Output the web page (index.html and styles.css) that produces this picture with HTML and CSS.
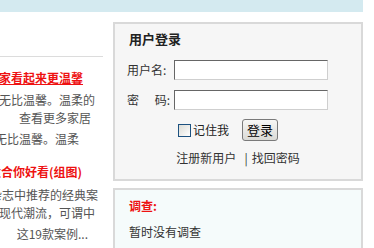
FILE: index.html
```html
<!DOCTYPE html>
<html lang="zh-CN">
<head>
<meta charset="utf-8">
<title>用户登录</title>
<link rel="stylesheet" href="styles.css">
</head>
<body>
<div class="topbar"></div>
<div class="main">
  <div class="left">
    <div class="rule"></div>
    <div class="news">
      <div class="ln t1"><a class="red ul">大家看起来更温馨</a></div>
      <div class="ln l2"><span>给人无比温馨。温柔的</span></div>
      <div class="ln l3"><a class="more">查看更多家居</a></div>
      <div class="ln l4"><span>给人无比温馨。温柔</span></div>
      <div class="ln t2"><a class="red">适合你好看(组图)</a></div>
      <div class="ln l6"><span>国外杂志中推荐的经典案</span></div>
      <div class="ln l7"><span>现代潮流，可谓中</span></div>
      <div class="ln l8"><span>这19款案例...</span></div>
    </div>
  </div>
  <div class="right">
    <div class="login">
      <div class="login-title">用户登录</div>
      <div class="frow r1">
        <label class="lab">用户名:</label>
        <input class="txt" type="text">
      </div>
      <div class="frow r2">
        <label class="lab lab-sp"><span>密</span><span>码:</span></label>
        <input class="txt" type="password">
      </div>
      <div class="crow">
        <input class="chk" type="checkbox">
        <span class="remember">记住我</span>
        <button class="btn" type="button">登录</button>
      </div>
      <div class="links"><a>注册新用户</a><span class="sep">|</span><a>找回密码</a></div>
    </div>
    <div class="poll">
      <div class="poll-title">调查:</div>
      <div class="poll-text">暂时没有调查</div>
    </div>
  </div>
</div>
</body>
</html>
```
FILE: styles.css
```css
* { box-sizing: border-box; }
html, body { margin: 0; padding: 0; background: #fff; }
body {
  font-family: "Noto Sans CJK SC", "DejaVu Sans", sans-serif;
  font-size: 12px;
  color: #333;
  width: 374px;
  height: 248px;
  overflow: hidden;
}
.topbar { width: 363px; height: 12px; background: #d4eaf0; }
.main { display: flex; width: 363px; padding-top: 10px; gap: 9px; align-items: flex-start; }
.left { width: 104px; flex: none; overflow: hidden; }
.rule { height: 1px; background: #dcdcdc; margin-top: 34px; width: 103px; }
.news { color: #555; }
.ln { display: flex; justify-content: flex-end; height: 18px; line-height: 18px; white-space: nowrap; }
.ln > * { flex: none; }
.red { color: #ee1111; font-weight: bold; }
.ul { text-decoration: underline; }
.t1 { margin-top: 12px; padding-right: 21px; }
.l2 { margin-top: 4px; padding-right: 9px; }
.l3 { padding-right: 13px; }
.l4 { margin-top: 3px; padding-right: 25px; }
.t2 { margin-top: 15px; padding-right: 22px; }
.l6 { margin-top: 5px; padding-right: 6px; }
.l7 { padding-right: 9px; }
.l8 { margin-top: 3px; padding-right: 16px; }

.right { width: 250px; flex: none; }
.login {
  width: 250px; height: 159px;
  border: 2px solid #d9d9d9; background: #f6f6f6;
  padding: 7px 0 0 14px;
}
.login-title { font-size: 13px; font-weight: bold; line-height: 16px; height: 16px; color: #222; }
.frow { display: flex; align-items: center; height: 20px; margin-left: -2px; }
.r1 { margin-top: 13px; }
.r2 { margin-top: 10px; }
.lab { width: 47px; flex: none; color: #333; line-height: 20px; }
.lab-sp { display: flex; justify-content: space-between; padding-right: 4px; }
.txt {
  width: 154px; height: 20px; margin: 0; padding: 0 2px;
  border: 1px solid; border-color: #666 #cfcfcf #cfcfcf #666;
  background: #fff; font: inherit; outline: none;
}
.crow { display: flex; align-items: center; height: 22px; margin-top: 9px; padding-left: 49px; }
.chk {
  appearance: none; -webkit-appearance: none; margin: 0;
  width: 13px; height: 13px; border: 1px solid #1c5180;
  background: linear-gradient(135deg, #dcdcd6, #fff);
}
.remember { margin-left: 2px; color: #222; line-height: 16px; }
.btn {
  margin-left: 13px; width: 36px; height: 22px; padding: 0;
  border: 1px solid #7a7a7a; border-radius: 3px;
  background: linear-gradient(#f7f7f5, #dadad6);
  font-family: inherit; font-size: 13px; color: #000; line-height: 18px;
}
.links { margin-top: 8px; height: 18px; line-height: 18px; text-align: center; padding-right: 14px; color: #333; }
.sep { margin: 0 4px 0 8px; }

.poll {
  margin-top: 7px; width: 250px; height: 60px;
  border: 2px solid #d9d9d9; border-bottom: none; background: #f5fbfb;
  padding: 8px 0 0 14px;
}
.poll-title { color: #ee1111; font-weight: bold; line-height: 16px; }
.poll-text { margin-top: 10px; line-height: 16px; color: #333; }
```
